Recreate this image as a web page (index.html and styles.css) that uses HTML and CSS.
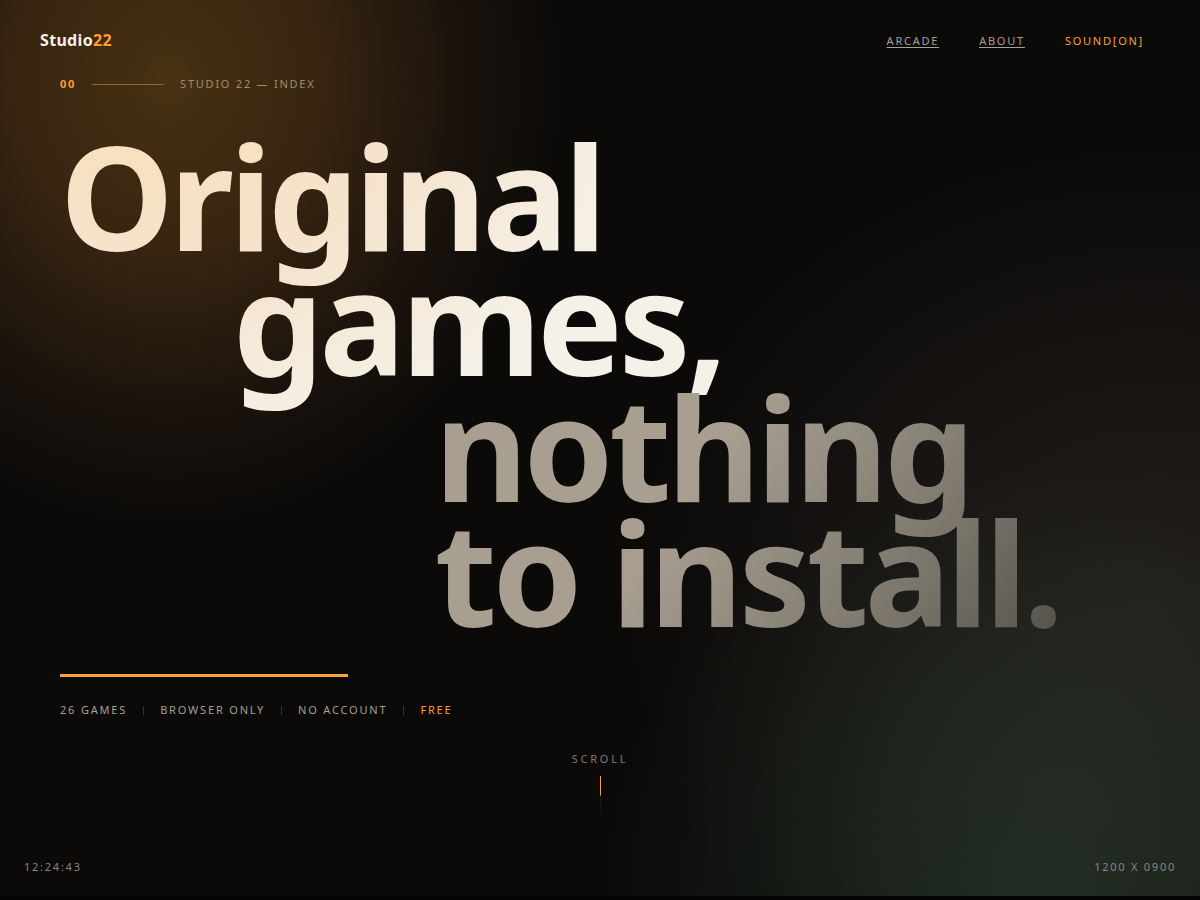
FILE: index.html
```html
<!DOCTYPE html>
<html lang="en">
<head>
<meta charset="utf-8">
<meta name="viewport" content="width=device-width, initial-scale=1">
<title>Studio22</title>
<link rel="stylesheet" href="styles.css">
</head>
<body>
<div class="page">
  <header class="site-header">
    <a class="brand" href="#">Studio<span class="accent">22</span></a>
    <nav class="nav">
      <a class="nav-link" href="#arcade">Arcade</a>
      <a class="nav-link" href="#about">About</a>
      <button class="sound" type="button">Sound[on]</button>
    </nav>
  </header>
  <main class="hero">
    <p class="index"><strong class="index-number">00</strong><span class="index-rule"></span><span>Studio 22 — Index</span></p>
    <h1 class="title">
      <span class="title-lead"><span class="line">Original</span><span class="line line-games">games,</span></span>
      <span class="title-rest"><span class="line">nothing</span><span class="line">to install.</span></span>
    </h1>
    <div class="bar"></div>
    <ul class="facts">
      <li>26 games</li>
      <li>Browser only</li>
      <li>No account</li>
      <li class="accent">Free</li>
    </ul>
    <div class="scroll"><span class="scroll-label">Scroll</span><span class="scroll-line"></span></div>
  </main>
  <footer class="status"><time>12:24:43</time><span>1200 x 0900</span></footer>
</div>
</body>
</html>
```
FILE: styles.css
```css
* { box-sizing: border-box; }

body {
  margin: 0;
  background: #0b0a09;
  color: #a89f91;
  font-family: "Noto Sans", "Open Sans", sans-serif;
  font-size: 11px;
  line-height: 16px;
}

.page {
  min-height: 100vh;
  display: flex;
  flex-direction: column;
  border-bottom: 4px solid #050404;
  background:
    radial-gradient(ellipse 33% 50% at 14% 9%, rgba(255, 165, 50, 0.25), rgba(255, 160, 50, 0.18) 38%, rgba(255, 150, 60, 0.06) 75%, transparent),
    radial-gradient(ellipse 36% 50% at 86% 102%, rgba(75, 130, 95, 0.26), rgba(70, 120, 90, 0.18) 42%, rgba(70, 110, 85, 0.07) 78%, transparent),
    radial-gradient(ellipse 44% 52% at 96% 68%, rgba(150, 130, 115, 0.16), rgba(150, 125, 110, 0.09) 50%, transparent),
    #0b0a09;
}

.accent { color: #ff9f2e; }

.site-header {
  display: flex;
  justify-content: space-between;
  align-items: center;
  padding: 28px 56px 0 40px;
}

.brand {
  color: #f5f1e8;
  font-size: 16px;
  line-height: 24px;
  font-weight: 700;
  letter-spacing: 0.02em;
  text-decoration: none;
}

.nav {
  display: flex;
  gap: 40px;
  padding-top: 2px;
  letter-spacing: 0.16em;
  text-transform: uppercase;
}

.nav-link {
  color: #a89f91;
  text-underline-offset: 2px;
}

.sound {
  padding: 0;
  border: 0;
  background: none;
  color: #f5a33c;
  font: inherit;
  letter-spacing: inherit;
  text-transform: inherit;
}

.hero {
  flex: 1;
  display: flex;
  flex-direction: column;
  padding: 24px 5vw 0;
}

.index {
  display: flex;
  align-items: center;
  gap: 16px;
  margin: 0;
  color: #a48a67;
  letter-spacing: 0.16em;
  text-transform: uppercase;
}

.index-number { color: #ff9f2e; }

.index-rule {
  width: 72px;
  height: 1px;
  background: #9a6426;
}

.title {
  margin: 41px 0 0;
  font-size: 12vw;
  line-height: 0.87;
  font-weight: 700;
  letter-spacing: -0.031em;
  white-space: nowrap;
}

.line { display: block; }

.title-lead,
.title-rest {
  display: block;
  padding-bottom: 32px;
  margin-bottom: -32px;
  color: transparent;
  -webkit-background-clip: text;
  background-clip: text;
}

.title-lead {
  background-image: radial-gradient(ellipse 480px 340px at 100px -20px, #f9debb, #f5e4ce 50%, #f5f1e8);
}

.line-games { margin-left: 1.2em; }

.title-rest {
  margin-left: 2.6em;
  background-image: linear-gradient(125deg, #a89f91 36%, #79746a 70%, #4f4c45 92%);
}

.bar {
  width: 288px;
  height: 3px;
  margin-top: 40px;
  background: #f5a33c;
}

.facts {
  display: flex;
  margin: 25px 0 0;
  padding: 0;
  list-style: none;
  letter-spacing: 0.165em;
  text-transform: uppercase;
}

.facts li {
  display: flex;
  align-items: center;
}

.facts li + li::before {
  content: "";
  width: 1px;
  height: 9px;
  margin: 0 16px;
  background: #35312d;
}

.scroll {
  display: flex;
  flex-direction: column;
  align-items: center;
  gap: 9px;
  margin-top: 33px;
  color: #81796f;
  letter-spacing: 0.25em;
  text-transform: uppercase;
}

.scroll-line {
  width: 1px;
  height: 48px;
  background: linear-gradient(#f5a33c 0 19px, #211c18 20px, transparent);
}

.status {
  display: flex;
  justify-content: space-between;
  padding: 0 24px 21px;
  color: #8c857a;
  letter-spacing: 0.16em;
  text-transform: uppercase;
}
```
